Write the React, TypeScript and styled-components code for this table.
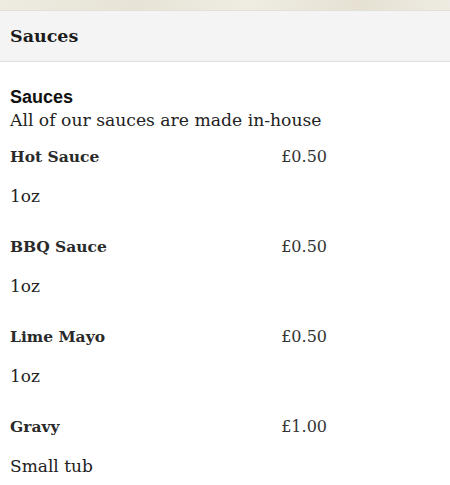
import styled, { createGlobalStyle } from 'styled-components';

const GlobalStyle = createGlobalStyle`
  html, body {
    margin: 0;
    padding: 0;
    background: #ffffff;
  }
  body {
    font-family: "DejaVu Serif", "Liberation Serif", serif;
    color: #222222;
  }
`;

const Page = styled.div`
  width: 450px;
  height: 485px;
  overflow: hidden;
  background: #ffffff;
`;

const TopStrip = styled.div`
  height: 10px;
  background: linear-gradient(90deg, #eeebe1 0%, #e7e3d6 30%, #efece3 55%, #e6e1d3 80%, #eeebe2 100%);
  border-bottom: 1px solid #e3e0d6;
`;

const Header = styled.div`
  height: 50px;
  display: flex;
  align-items: center;
  padding: 0 10px;
  background: #f4f4f4;
  border-bottom: 1px solid #dedede;
`;

const HeaderTitle = styled.h2`
  margin: 0;
  font-family: "DejaVu Serif", serif;
  font-size: 17.5px;
  font-weight: bold;
  color: #1c1c1c;
`;

const Content = styled.div`
  padding: 24px 10px 0;
  width: 317px;
`;

const SectionTitle = styled.div`
  font-family: "Liberation Sans", Arial, sans-serif;
  font-size: 18px;
  font-weight: bold;
  line-height: 22px;
  color: #111111;
`;

const SectionText = styled.div`
  font-size: 17.2px;
  line-height: 24px;
  white-space: nowrap;
  color: #222222;
`;

const Item = styled.div`
  margin-top: 14px;
  & + & {
    margin-top: 29px;
  }
`;

const ItemRow = styled.div`
  display: flex;
  justify-content: space-between;
  align-items: baseline;
`;

const ItemName = styled.span`
  font-size: 15.5px;
  font-weight: bold;
  line-height: 22px;
  color: #2a2a2a;
`;

const ItemPrice = styled.span`
  font-size: 16px;
  line-height: 22px;
  color: #333333;
`;

const ItemDesc = styled.div`
  margin-top: 17px;
  font-size: 17px;
  line-height: 22px;
  color: #222222;
`;

const items = [
  { name: 'Hot Sauce', price: '£0.50', desc: '1oz' },
  { name: 'BBQ Sauce', price: '£0.50', desc: '1oz' },
  { name: 'Lime Mayo', price: '£0.50', desc: '1oz' },
  { name: 'Gravy', price: '£1.00', desc: 'Small tub' },
];

const App = () => {
  return (
    <Page>
      <GlobalStyle />
      <TopStrip />
      <Header>
        <HeaderTitle>Sauces</HeaderTitle>
      </Header>
      <Content>
        <SectionTitle>Sauces</SectionTitle>
        <SectionText>All of our sauces are made in-house</SectionText>
        {items.map((item) => (
          <Item key={item.name}>
            <ItemRow>
              <ItemName>{item.name}</ItemName>
              <ItemPrice>{item.price}</ItemPrice>
            </ItemRow>
            <ItemDesc>{item.desc}</ItemDesc>
          </Item>
        ))}
      </Content>
    </Page>
  );
};

export default App;
